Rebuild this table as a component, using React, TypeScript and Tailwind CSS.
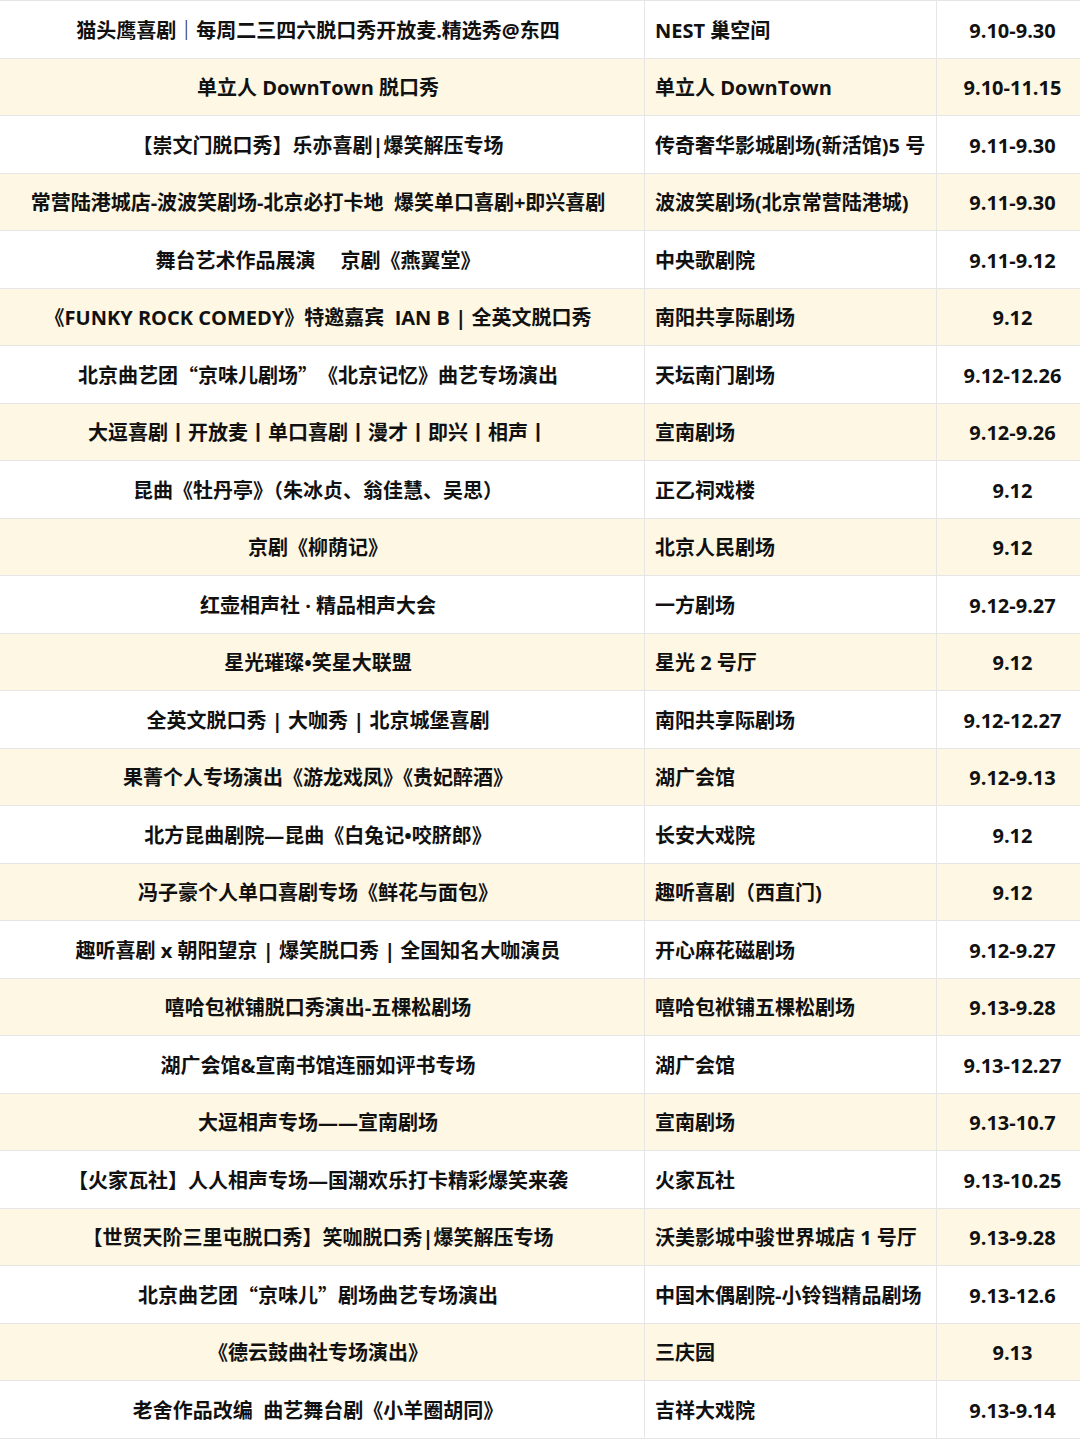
import React from 'react';

type Row = [string, string, string];

const rows: Row[] = [
  ['猫头鹰喜剧｜每周二三四六脱口秀开放麦.精选秀@东四', 'NEST 巢空间', '9.10-9.30'],
  ['单立人 DownTown 脱口秀', '单立人 DownTown', '9.10-11.15'],
  ['【崇文门脱口秀】乐亦喜剧|爆笑解压专场', '传奇奢华影城剧场(新活馆)5 号', '9.11-9.30'],
  ['常营陆港城店-波波笑剧场-北京必打卡地  爆笑单口喜剧+即兴喜剧', '波波笑剧场(北京常营陆港城)', '9.11-9.30'],
  ['舞台艺术作品展演　 京剧《燕翼堂》', '中央歌剧院', '9.11-9.12'],
  ['《FUNKY ROCK COMEDY》特邀嘉宾  IAN B | 全英文脱口秀', '南阳共享际剧场', '9.12'],
  ['北京曲艺团“京味儿剧场”《北京记忆》曲艺专场演出', '天坛南门剧场', '9.12-12.26'],
  ['大逗喜剧丨开放麦丨单口喜剧丨漫才丨即兴丨相声丨', '宣南剧场', '9.12-9.26'],
  ['昆曲《牡丹亭》（朱冰贞、翁佳慧、吴思）', '正乙祠戏楼', '9.12'],
  ['京剧《柳荫记》', '北京人民剧场', '9.12'],
  ['红壶相声社 · 精品相声大会', '一方剧场', '9.12-9.27'],
  ['星光璀璨•笑星大联盟', '星光 2 号厅', '9.12'],
  ['全英文脱口秀 | 大咖秀 | 北京城堡喜剧', '南阳共享际剧场', '9.12-12.27'],
  ['果菁个人专场演出《游龙戏凤》《贵妃醉酒》', '湖广会馆', '9.12-9.13'],
  ['北方昆曲剧院—昆曲《白兔记•咬脐郎》', '长安大戏院', '9.12'],
  ['冯子豪个人单口喜剧专场《鲜花与面包》', '趣听喜剧（西直门)', '9.12'],
  ['趣听喜剧 x 朝阳望京 | 爆笑脱口秀 | 全国知名大咖演员', '开心麻花磁剧场', '9.12-9.27'],
  ['嘻哈包袱铺脱口秀演出-五棵松剧场', '嘻哈包袱铺五棵松剧场', '9.13-9.28'],
  ['湖广会馆&宣南书馆连丽如评书专场', '湖广会馆', '9.13-12.27'],
  ['大逗相声专场——宣南剧场', '宣南剧场', '9.13-10.7'],
  ['【火家瓦社】人人相声专场—国潮欢乐打卡精彩爆笑来袭', '火家瓦社', '9.13-10.25'],
  ['【世贸天阶三里屯脱口秀】笑咖脱口秀|爆笑解压专场', '沃美影城中骏世界城店 1 号厅', '9.13-9.28'],
  ['北京曲艺团“京味儿”剧场曲艺专场演出', '中国木偶剧院-小铃铛精品剧场', '9.13-12.6'],
  ['《德云鼓曲社专场演出》', '三庆园', '9.13'],
  ['老舍作品改编  曲艺舞台剧《小羊圈胡同》', '吉祥大戏院', '9.13-9.14'],
];

// curly quotes look fullwidth in the original, so draw them with the CJK face
const withQuotes = (s: string) =>
  s.split(/([“”])/).map((part, i) =>
    part === '“' || part === '”' ? (
      <span key={i} style={{ fontFamily: '"Noto Sans CJK SC", sans-serif' }}>
        {part}
      </span>
    ) : (
      part
    )
  );

export default function App() {
  return (
    <div
      className="w-[1080px] bg-white text-[#111] border-t border-[#e6e6e6]"
      style={{ fontFamily: '"Open Sans", "Noto Sans CJK SC", sans-serif' }}
    >
      {rows.map((r, i) => (
        <div
          key={i}
          className={`grid grid-cols-[645px_292px_143px] h-[57.5px] border-b border-[#e6e6e6] text-[20px] font-bold ${
            i % 2 === 1 ? 'bg-[#fdf7e4]' : 'bg-white'
          }`}
        >
          <div className="flex items-center justify-center whitespace-pre border-r border-[#e6e6e6] pr-2 pt-[3px]">
            {withQuotes(r[0])}
          </div>
          <div className="flex items-center whitespace-pre border-r border-[#e6e6e6] pl-[10px] pt-[3px]">
            {r[1]}
          </div>
          <div className="flex items-center justify-center whitespace-pre pl-2 pt-[3px]">
            {r[2]}
          </div>
        </div>
      ))}
    </div>
  );
}
